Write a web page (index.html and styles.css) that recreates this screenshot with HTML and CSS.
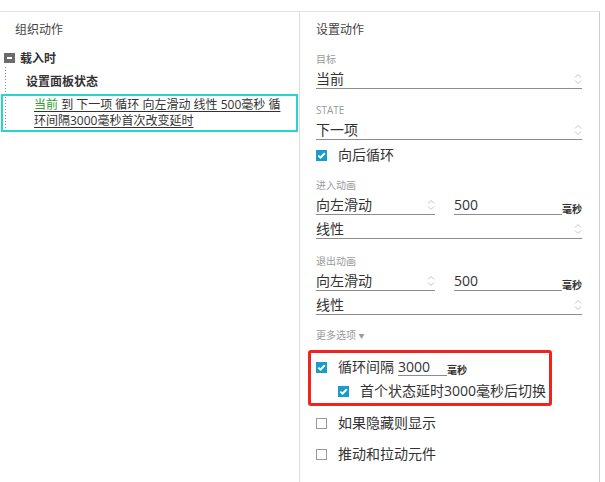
FILE: index.html
```html
<!DOCTYPE html>
<html lang="zh-CN">
<head>
    <meta charset="UTF-8">
    <title>设置动作</title>
    <link rel="stylesheet" href="styles.css">
</head>
<body>
    <div class="editor">
        <!-- 左侧：组织动作 -->
        <div class="pane pane-left">
            <div class="pane-title">组织动作</div>
            <div class="tree-event">
                <span class="toggle"></span>
                <span>载入时</span>
            </div>
            <div class="tree-children">
                <div class="tree-case">设置面板状态</div>
                <div class="tree-action">
                    <span class="hl">当前</span> 到 下一项 循环 向左滑动 线性 500毫秒 循<br>环间隔3000毫秒首次改变延时
                </div>
            </div>
        </div>

        <!-- 右侧：设置动作 -->
        <div class="pane pane-right">
            <div class="pane-title">设置动作</div>

            <div class="label first">目标</div>
            <div class="field">
                <span class="value">当前</span>
                <svg class="spin" width="8" height="12" viewBox="0 0 8 12"><path d="M1 4.5 4 1.5 7 4.5M1 7.5 4 10.5 7 7.5"/></svg>
            </div>

            <div class="label">STATE</div>
            <div class="field">
                <span class="value">下一项</span>
                <svg class="spin" width="8" height="12" viewBox="0 0 8 12"><path d="M1 4.5 4 1.5 7 4.5M1 7.5 4 10.5 7 7.5"/></svg>
            </div>

            <div class="check check-wrap">
                <span class="box on"><svg width="11" height="11" viewBox="0 0 11 11"><path d="M2.3 5.6 4.5 7.7 8.8 3.2"/></svg></span>
                <span>向后循环</span>
            </div>

            <div class="label">进入动画</div>
            <div class="anim-row">
                <div class="field short">
                    <span class="value">向左滑动</span>
                    <svg class="spin" width="8" height="12" viewBox="0 0 8 12"><path d="M1 4.5 4 1.5 7 4.5M1 7.5 4 10.5 7 7.5"/></svg>
                </div>
                <div class="field num"><span class="value">500</span></div>
                <span class="unit">毫秒</span>
            </div>
            <div class="field">
                <span class="value">线性</span>
                <svg class="spin" width="8" height="12" viewBox="0 0 8 12"><path d="M1 4.5 4 1.5 7 4.5M1 7.5 4 10.5 7 7.5"/></svg>
            </div>

            <div class="label out">退出动画</div>
            <div class="anim-row">
                <div class="field short">
                    <span class="value">向左滑动</span>
                    <svg class="spin" width="8" height="12" viewBox="0 0 8 12"><path d="M1 4.5 4 1.5 7 4.5M1 7.5 4 10.5 7 7.5"/></svg>
                </div>
                <div class="field num"><span class="value">500</span></div>
                <span class="unit">毫秒</span>
            </div>
            <div class="field">
                <span class="value">线性</span>
                <svg class="spin" width="8" height="12" viewBox="0 0 8 12"><path d="M1 4.5 4 1.5 7 4.5M1 7.5 4 10.5 7 7.5"/></svg>
            </div>

            <div class="label more">更多选项 <span class="caret">▼</span></div>

            <div class="loop-box">
                <div class="check">
                    <span class="box on"><svg width="11" height="11" viewBox="0 0 11 11"><path d="M2.3 5.6 4.5 7.7 8.8 3.2"/></svg></span>
                    <span>循环间隔</span>
                    <span class="interval">3000</span>
                    <span class="unit">毫秒</span>
                </div>
                <div class="check sub">
                    <span class="box on"><svg width="11" height="11" viewBox="0 0 11 11"><path d="M2.3 5.6 4.5 7.7 8.8 3.2"/></svg></span>
                    <span>首个状态延时3000毫秒后切换</span>
                </div>
            </div>

            <div class="check opt">
                <span class="box"></span>
                <span>如果隐藏则显示</span>
            </div>
            <div class="check opt2">
                <span class="box"></span>
                <span>推动和拉动元件</span>
            </div>
        </div>
    </div>
</body>
</html>
```

FILE: styles.css
```css
*{
    padding: 0;
    margin: 0;
    box-sizing: border-box;
}
body{
    background-color: #fff;
    color: #333;
    font-family: "Open Sans", "Noto Sans CJK SC", sans-serif;
}
.editor{
    display: flex;
    width: 600px;
    height: 471px;
    margin-top: 11px;
    border-top: 1px solid #e3e3e3;
    border-right: 1px solid #cfcfcf;
}
.pane{
    padding-top: 9px;
}
.pane-left{
    width: 300px;
    border-right: 1px solid #ddd;
}
.pane-right{
    flex: 1;
    padding-left: 16px;
    padding-right: 17px;
}
.pane-title{
    font-size: 12px;
    line-height: 18px;
    color: #444;
}
.pane-left .pane-title{
    margin-left: 15px;
}

/* 左侧树 */
.tree-event{
    display: flex;
    align-items: center;
    height: 18px;
    margin-top: 10px;
    padding-left: 4px;
    font-size: 12px;
    font-weight: bold;
}
.toggle{
    position: relative;
    width: 11px;
    height: 10px;
    margin-right: 5px;
    background-color: #6b6b6b;
}
.toggle::after{
    content: "";
    position: absolute;    /*减号*/
    left: 3px;
    right: 3px;
    top: 4px;
    height: 2px;
    background-color: #fff;
}
.tree-children{
    margin-left: 5px;
    padding-top: 6px;
    padding-bottom: 1px;
    background-image: linear-gradient(#8c8c8c 34%, transparent 34%);
    background-size: 1px 3px;
    background-repeat: repeat-y;
}
.tree-case{
    height: 18px;
    line-height: 18px;
    padding-left: 21px;
    font-size: 12px;
    font-weight: bold;
}
.tree-action{
    width: 297px;
    margin-top: 3px;
    margin-left: -4px;
    padding: 1px 0 1px 31px;
    border: 2px solid #2ad3d3;
    font-size: 12px;
    line-height: 16px;
    text-decoration: underline;
    text-underline-offset: 2px;
}
.tree-action .hl{
    color: #2f9e2f;
}

/* 右侧表单 */
.label{
    margin-top: 15px;
    font-size: 10px;
    line-height: 12px;
    color: #9a9a9a;
}
.label.first{
    margin-top: 14px;
}
.label.out{
    margin-top: 16px;
}
.label.more{
    margin-top: 14px;
}
.caret{
    font-size: 6px;
    vertical-align: 1px;
}
.field{
    display: flex;
    align-items: center;
    height: 24px;
    padding-top: 5px;
    border-bottom: 1px solid #8c8c8c;
    font-size: 14px;
    line-height: 18px;
}
.field .value{
    flex: 1;
}
.spin{
    fill: none;
    stroke: #c4c4c4;
    stroke-width: 1;
}
.anim-row{
    display: flex;
    align-items: flex-end;
}
.field.short{
    width: 119px;
}
.field.num{
    width: 108px;
    margin-left: 19px;
}
.unit{
    font-size: 10px;
    line-height: 12px;
    font-weight: bold;
    color: #333;
}

/* 复选框 */
.check{
    display: flex;
    align-items: center;
    height: 18px;
    font-size: 14px;
    line-height: 18px;
    white-space: nowrap;
}
.check-wrap{
    margin-top: 6px;
}
.box{
    display: flex;
    flex-shrink: 0;
    width: 11px;
    height: 11px;
    margin-right: 11px;
    border: 1px solid #9a9a9a;
    background-color: #fff;
}
.box.on{
    border: none;
    background-color: #1a9bc9;
}
.box svg{
    fill: none;
    stroke: #fff;
    stroke-width: 2;
}
.loop-box{
    width: 244px;
    margin: 8px 0 0 -8px;
    padding: 5px 5px 3px;
    border: 3px solid #f0231d;
    border-radius: 3px;
}
.loop-box .check{
    align-items: flex-end;
}
.loop-box .check .box{
    align-self: center;
}
.interval{
    width: 49px;
    margin-left: 4px;
    border-bottom: 1px solid #8c8c8c;
    line-height: 17px;
}
.check.sub{
    margin-top: 6px;
    margin-left: 22px;
}
.check.opt{
    margin-top: 8px;
}
.check.opt2{
    margin-top: 13px;
}
```
